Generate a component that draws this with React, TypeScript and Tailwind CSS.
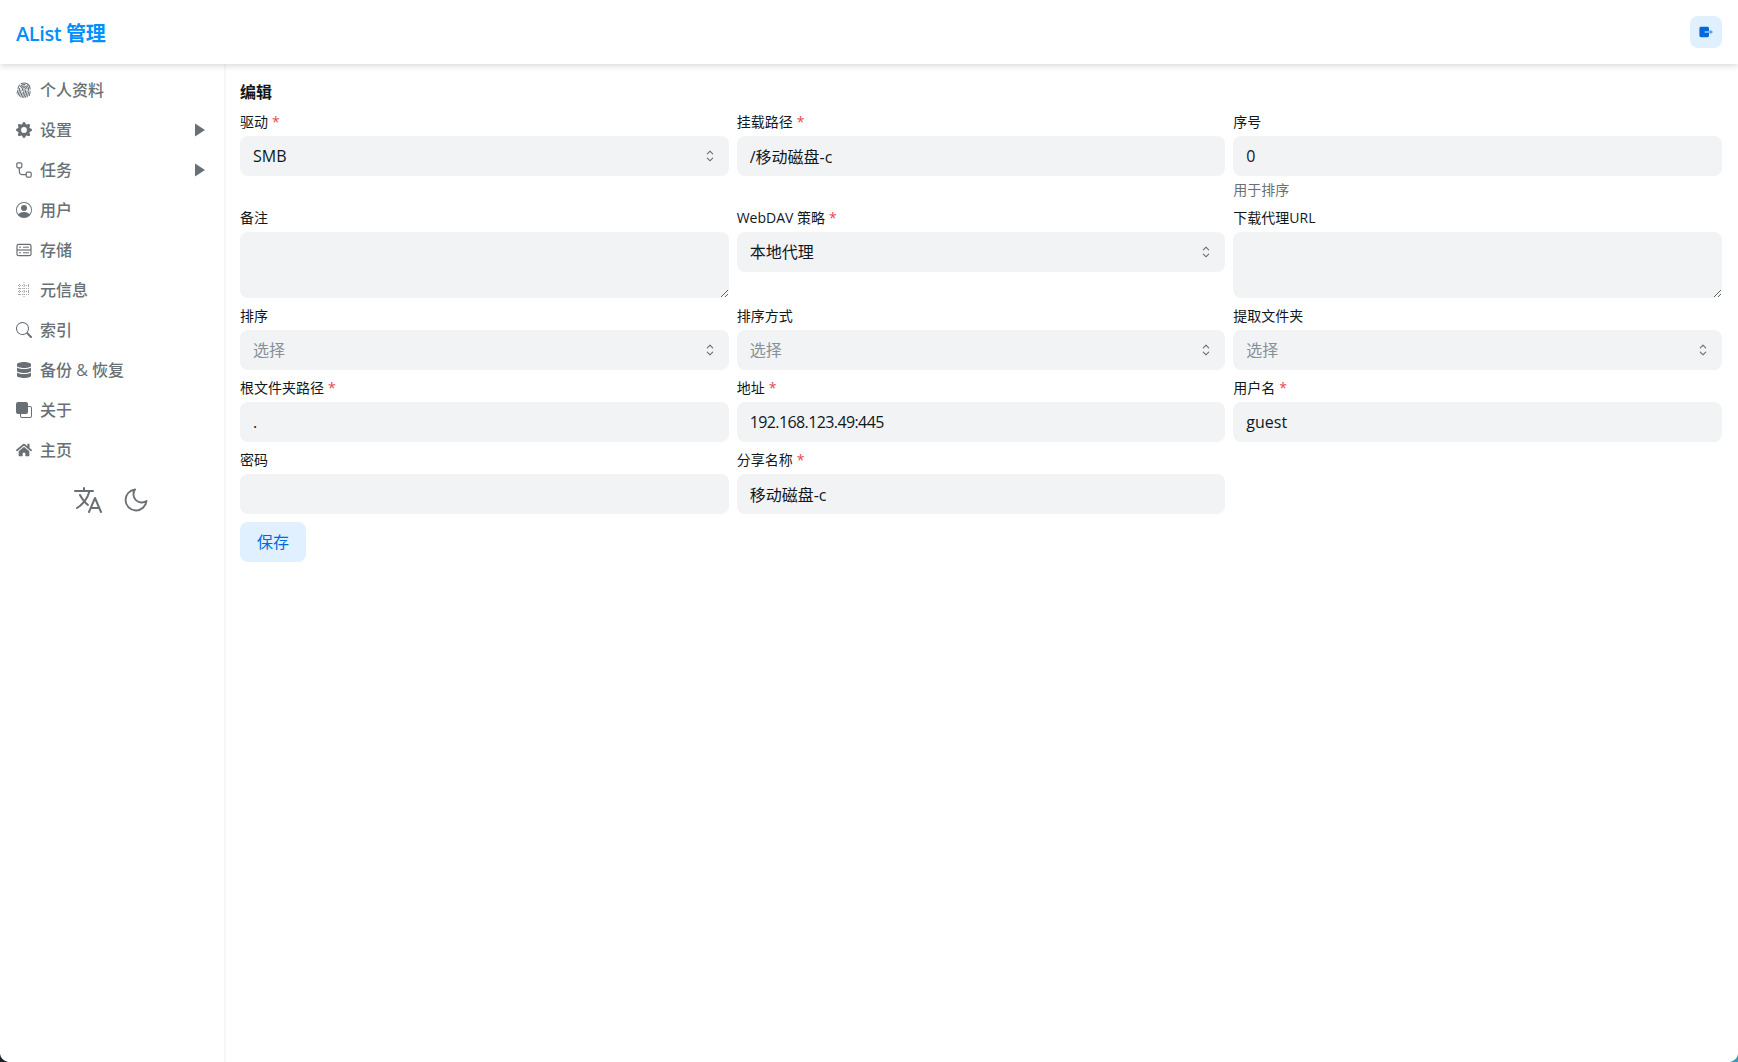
import { ReactNode } from 'react'
import {
  BsFingerprint,
  BsGearFill,
  BsPersonCircle,
  BsSearch,
  BsFront,
} from 'react-icons/bs'
import { FaDatabase, FaHome } from 'react-icons/fa'
import { IoLanguageOutline } from 'react-icons/io5'
import { FiMoon } from 'react-icons/fi'

const FONT = "font-['Open_Sans','Noto_Sans_CJK_SC',sans-serif]"

function TasksIcon() {
  return (
    <svg viewBox="0 0 16 16" className="w-4 h-4" fill="none" stroke="currentColor" strokeWidth="1.2">
      <rect x="0.8" y="0.8" width="5" height="5" rx="1.2" />
      <rect x="10.2" y="10.2" width="5" height="5" rx="1.2" />
      <path d="M3.3 5.8v3.4a3.5 3.5 0 0 0 3.5 3.5h3.4" />
    </svg>
  )
}

function StorageIcon() {
  return (
    <svg viewBox="0 0 16 16" className="w-4 h-4" fill="none" stroke="currentColor" strokeWidth="1.2">
      <rect x="1" y="2.4" width="14" height="11.2" rx="1.6" />
      <path d="M1 8h14" />
      <path d="M3 5.200h2M7 5.200h6M3 10.800h2M7 10.800h6" strokeWidth="1" />
    </svg>
  )
}

function MetaIcon() {
  return (
    <svg viewBox="0 0 16 16" className="w-4 h-4 opacity-60" fill="none" stroke="currentColor" strokeWidth="1" strokeDasharray="1 1">
      <path d="M2 3.500h12M2 6.500h12M2 9.500h12M2 12.500h12" />
      <path d="M3.500 2v12M8 0v16M12.500 2v12" />
    </svg>
  )
}

function Chevrons() {
  return (
    <svg viewBox="0 0 15 15" className="w-[18px] h-[18px] text-[#687076]" fill="currentColor">
      <path d="M4.93 5.43a.45.45 0 0 0 .64.64L7.5 4.14l1.93 1.93a.45.45 0 0 0 .64-.64L7.82 3.18a.45.45 0 0 0-.64 0L4.93 5.43Zm5.14 4.14a.45.45 0 0 0-.64-.64L7.5 10.86 5.57 8.93a.45.45 0 0 0-.64.64l2.25 2.25c.18.18.46.18.64 0l2.25-2.25Z" />
    </svg>
  )
}

function ExitIcon() {
  return (
    <svg viewBox="0 0 16 16" className="w-4 h-4" fill="currentColor">
      <path d="M3 2.800h6.400c.9 0 1.600.7 1.600 1.600v2.500H6.800v2.200H11v2.500c0 .9-.7 1.600-1.600 1.600H3c-.9 0-1.600-.7-1.600-1.600V4.400c0-.9.7-1.600 1.600-1.600Z" />
      <path d="M7 7.300h5.200V5.500L15 8l-2.800 2.500V8.700H7Z" opacity="0.6" />
    </svg>
  )
}

function Caret() {
  return (
    <svg viewBox="0 0 10 14" className="w-2.5 h-3.5" fill="currentColor">
      <path d="M0 0.500 10 7 0 13.500Z" />
    </svg>
  )
}

const menu: { label: string; icon: ReactNode; arrow?: boolean }[] = [
  { label: '个人资料', icon: <BsFingerprint className="w-4 h-4" /> },
  { label: '设置', icon: <BsGearFill className="w-4 h-4" />, arrow: true },
  { label: '任务', icon: <TasksIcon />, arrow: true },
  { label: '用户', icon: <BsPersonCircle className="w-4 h-4" /> },
  { label: '存储', icon: <StorageIcon /> },
  { label: '元信息', icon: <MetaIcon /> },
  { label: '索引', icon: <BsSearch className="w-4 h-4" /> },
  { label: '备份 & 恢复', icon: <FaDatabase className="w-4 h-4" /> },
  { label: '关于', icon: <BsFront className="w-4 h-4" /> },
  { label: '主页', icon: <FaHome className="w-4 h-4" /> },
]

function Label({ text, required }: { text: ReactNode; required?: boolean }) {
  return (
    <label className="block h-5 mb-1 text-sm leading-5 font-normal text-[#11181c]">
      {text}
      {required && <span className="ml-1 text-[#e5484d]">*</span>}
    </label>
  )
}

function TextField({ label, value, required, hint, valueClass }: { label: string; value: string; required?: boolean; hint?: string; valueClass?: string }) {
  return (
    <div>
      <Label text={label} required={required} />
      <input
        defaultValue={value}
        className={`block w-full h-10 px-[13px] rounded-lg bg-[#f1f3f5] text-base text-[#11181c] outline-none ${valueClass ?? ''}`}
      />
      {hint && <p className="mt-1 h-5 text-sm leading-5 text-[#687076]">{hint}</p>}
    </div>
  )
}

function AreaField({ label }: { label: ReactNode }) {
  return (
    <div>
      <Label text={label} />
      <textarea className="block w-full h-[66px] px-3 py-2 rounded-lg bg-[#f1f3f5] text-base outline-none" />
    </div>
  )
}

function SelectField({ label, value, required }: { label: ReactNode; value?: string; required?: boolean }) {
  return (
    <div>
      <Label text={label} required={required} />
      <button className="flex items-center justify-between w-full h-10 pl-[13px] pr-2.5 rounded-lg bg-[#f1f3f5] text-base">
        <span className={value ? 'text-[#11181c]' : 'text-[#889096]'}>{value ?? '选择'}</span>
        <Chevrons />
      </button>
    </div>
  )
}

export default function App() {
  return (
    <div className={`${FONT} relative flex flex-col h-screen bg-white overflow-hidden`}>
      <header className="relative z-10 flex items-center justify-between h-16 shrink-0 pl-4 pr-4 bg-white shadow-[0_2px_6px_rgba(0,0,0,0.15)]">
        <h1 className="pt-[3px] text-xl font-semibold tracking-[-0.4px] text-[#0091ff]">AList 管理</h1>
        <button className="flex items-center justify-center w-8 h-8 rounded-lg bg-[#e1f0ff] text-[#006adc]">
          <ExitIcon />
        </button>
      </header>
      <div className="flex flex-1 min-h-0">
        <aside className="w-[226px] shrink-0 pt-1.5 border-r-2 border-[#f7f7f8]">
          {menu.map(item => (
            <div key={item.label} className="flex items-center h-10 pl-4 pr-[19px] text-[#687076]">
              <span className="w-4 shrink-0">{item.icon}</span>
              <span className="ml-2 flex-1 text-base font-medium">{item.label}</span>
              {item.arrow && <Caret />}
            </div>
          ))}
          <div className="flex items-center justify-center gap-[18px] mt-[10px] h-10 pr-0.5 text-[#687076]">
            <IoLanguageOutline className="w-8 h-8" />
            <FiMoon className="w-7 h-7" strokeWidth={1.6} />
          </div>
        </aside>
        <main className="flex-1 min-w-0 pt-4 pl-[14px] pr-4">
          <h2 className="h-6 mb-2 text-base leading-6 font-semibold text-[#11181c]">编辑</h2>
          <div className="grid grid-cols-3 gap-2">
            <SelectField label="驱动" value="SMB" required />
            <TextField label="挂载路径" value="/移动磁盘-c" required />
            <TextField label="序号" value="0" hint="用于排序" />
            <AreaField label="备注" />
            <SelectField label={<><span className="font-medium">WebDAV</span> 策略</>} value="本地代理" required />
            <AreaField label={<>下载代理<span className="font-medium">URL</span></>} />
            <SelectField label="排序" />
            <SelectField label="排序方式" />
            <SelectField label="提取文件夹" />
            <TextField label="根文件夹路径" value="." required />
            <TextField label="地址" value="192.168.123.49:445" required valueClass="tracking-[-0.6px]" />
            <TextField label="用户名" value="guest" required />
            <TextField label="密码" value="" />
            <TextField label="分享名称" value="移动磁盘-c" required />
          </div>
          <button className="mt-2 w-[66px] h-10 rounded-lg bg-[#e1f0ff] text-base text-[#006adc]">保存</button>
        </main>
      </div>
      <svg viewBox="0 0 8 8" className="absolute left-0 bottom-0 w-2 h-2" fill="#1f2328">
        <path d="M0 0 Q1 6 8 8 H0Z" />
      </svg>
      <svg viewBox="0 0 8 8" className="absolute right-0 bottom-0 w-2 h-2" fill="#3a9ab8">
        <path d="M8 0 Q7 6 0 8 H8Z" />
      </svg>
    </div>
  )
}
